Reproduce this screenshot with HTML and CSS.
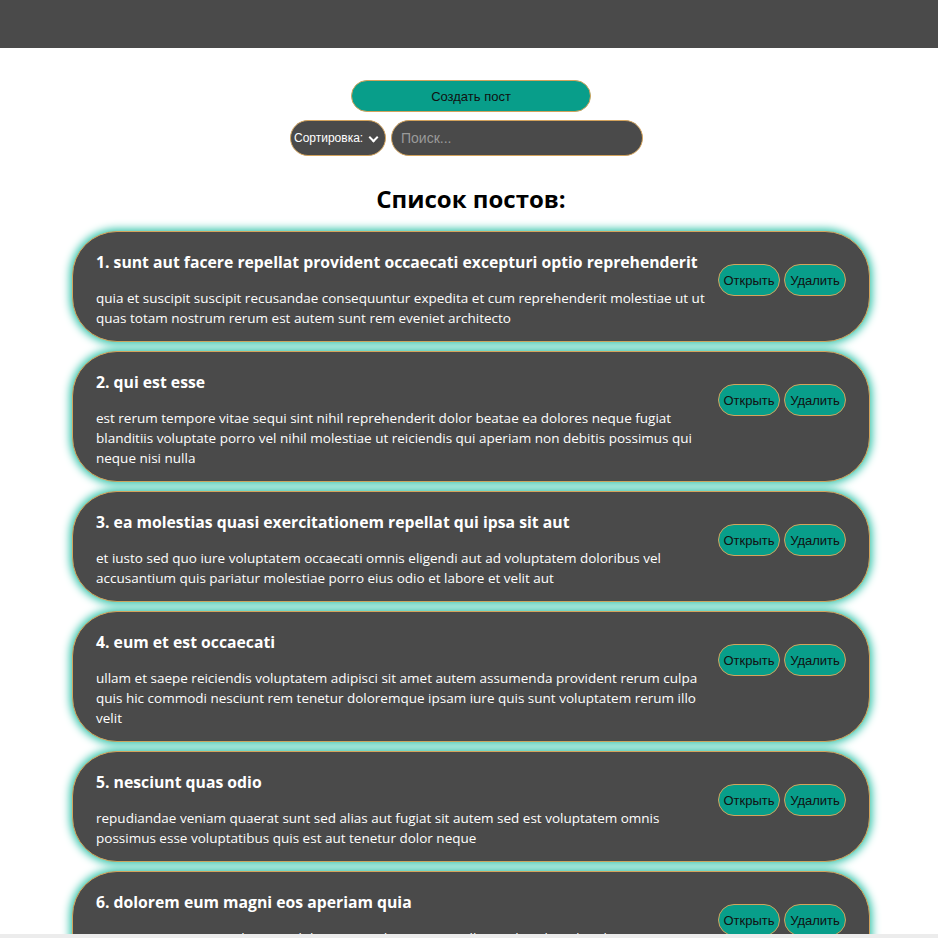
FILE: index.html
```html
<!DOCTYPE html>
<html lang="ru">
<head>
<meta charset="utf-8">
<title>Посты</title>
<link rel="stylesheet" href="styles.css">
</head>
<body>
<header class="navbar"></header>
<main class="app">
  <div class="controls">
    <button class="btn btn-create">Создать пост</button>
    <div class="filter">
      <div class="select-wrap">
        <select class="select"><option>Сортировка:</option></select>
      </div>
      <input class="search" type="text" placeholder="Поиск...">
    </div>
  </div>
  <h1 class="list-title">Список постов:</h1>
  <div class="list">
    <div class="post">
      <div class="post-content">
        <strong class="post-title">1. sunt aut facere repellat provident occaecati excepturi optio reprehenderit</strong>
        <div class="post-body">quia et suscipit suscipit recusandae consequuntur expedita et cum reprehenderit molestiae ut ut quas totam nostrum rerum est autem sunt rem eveniet architecto</div>
      </div>
      <div class="post-btns"><button class="btn">Открыть</button><button class="btn">Удалить</button></div>
    </div>
    <div class="post">
      <div class="post-content">
        <strong class="post-title">2. qui est esse</strong>
        <div class="post-body">est rerum tempore vitae sequi sint nihil reprehenderit dolor beatae ea dolores neque fugiat blanditiis voluptate porro vel nihil molestiae ut reiciendis qui aperiam non debitis possimus qui neque nisi nulla</div>
      </div>
      <div class="post-btns"><button class="btn">Открыть</button><button class="btn">Удалить</button></div>
    </div>
    <div class="post">
      <div class="post-content">
        <strong class="post-title">3. ea molestias quasi exercitationem repellat qui ipsa sit aut</strong>
        <div class="post-body">et iusto sed quo iure voluptatem occaecati omnis eligendi aut ad voluptatem doloribus vel accusantium quis pariatur molestiae porro eius odio et labore et velit aut</div>
      </div>
      <div class="post-btns"><button class="btn">Открыть</button><button class="btn">Удалить</button></div>
    </div>
    <div class="post">
      <div class="post-content">
        <strong class="post-title">4. eum et est occaecati</strong>
        <div class="post-body">ullam et saepe reiciendis voluptatem adipisci sit amet autem assumenda provident rerum culpa quis hic commodi nesciunt rem tenetur doloremque ipsam iure quis sunt voluptatem rerum illo velit</div>
      </div>
      <div class="post-btns"><button class="btn">Открыть</button><button class="btn">Удалить</button></div>
    </div>
    <div class="post">
      <div class="post-content">
        <strong class="post-title">5. nesciunt quas odio</strong>
        <div class="post-body">repudiandae veniam quaerat sunt sed alias aut fugiat sit autem sed est voluptatem omnis possimus esse voluptatibus quis est aut tenetur dolor neque</div>
      </div>
      <div class="post-btns"><button class="btn">Открыть</button><button class="btn">Удалить</button></div>
    </div>
    <div class="post">
      <div class="post-content">
        <strong class="post-title">6. dolorem eum magni eos aperiam quia</strong>
        <div class="post-body">ut aspernatur corporis harum nihil quis provident sequi mollitia nobis aliquid molestiae perspiciatis et ea nemo ab reprehenderit accusantium quas voluptate dolores velit et doloremque molestiae</div>
      </div>
      <div class="post-btns"><button class="btn">Открыть</button><button class="btn">Удалить</button></div>
    </div>
  </div>
</main>
<div class="bottom-strip"></div>
</body>
</html>
```
FILE: styles.css
```css
* { box-sizing: border-box; }
body {
  margin: 0;
  font-family: "Open Sans", "Noto Sans", sans-serif;
  background: #fff;
  color: #000;
}
.navbar {
  height: 48px;
  background: #4a4a4a;
}
.app {
  width: 802px;
  margin: 0 auto;
  padding: 32px 0 0 4px;
}
.controls {
  display: flex;
  flex-direction: column;
  align-items: center;
  gap: 8px;
}
.btn {
  font-family: "Liberation Sans", Arial, sans-serif;
  font-size: 13px;
  color: #111;
  background: #089e8a;
  border: 1px solid #d3a35c;
  border-radius: 20px;
  height: 32px;
  padding: 0 4px;
  cursor: pointer;
}
.btn-create {
  width: 240px;
  height: 32px;
}
.filter {
  display: flex;
  align-items: center;
  gap: 5px;
  margin-right: 9px;
}
.select-wrap {
  position: relative;
}
.select {
  appearance: none;
  width: 96px;
  height: 36px;
  background: #4a4a4a;
  color: #fff;
  border: 1px solid #d3a35c;
  border-radius: 18px;
  font-family: "Liberation Sans", Arial, sans-serif;
  font-size: 12px;
  padding: 0 20px 0 3px;
}
.select-wrap::after {
  content: "";
  position: absolute;
  right: 9px;
  top: 14px;
  width: 5px;
  height: 5px;
  border-right: 2px solid #fff;
  border-bottom: 2px solid #fff;
  transform: rotate(45deg);
  pointer-events: none;
}
.search {
  width: 252px;
  height: 36px;
  margin-top: -1px;
  background: #4a4a4a;
  color: #fff;
  border: 1px solid #d3a35c;
  border-radius: 18px;
  font-family: "Liberation Sans", Arial, sans-serif;
  font-size: 14px;
  padding: 0 9px;
  outline: none;
}
.search::placeholder { color: #9a9a9a; }
.list-title {
  text-align: center;
  font-size: 24px;
  font-weight: 700;
  margin: 27px 0 16px;
  line-height: 32px;
}
.list {
  display: flex;
  flex-direction: column;
  gap: 9px;
}
.post {
  display: flex;
  align-items: flex-start;
  background: #4a4a4a;
  color: #fff;
  border: 1px solid #d3a35c;
  border-radius: 45px;
  box-shadow: 0 0 8px 2px #2cc2a8;
  padding: 18px 23px 13px;
}
.post-content {
  flex: 1;
  min-width: 0;
}
.post-title {
  display: block;
  font-size: 15.75px;
  font-weight: 700;
  line-height: 24px;
  margin-bottom: 14px;
}
.post-body {
  font-size: 13.5px;
  line-height: 20px;
}
.post-btns {
  display: flex;
  gap: 4px;
  margin: 14px 0 0 8px;
}
.post-btns .btn { width: 62px; }
.bottom-strip {
  position: fixed;
  left: 0;
  right: 0;
  bottom: 0;
  height: 4px;
  background: #ececec;
}
```
